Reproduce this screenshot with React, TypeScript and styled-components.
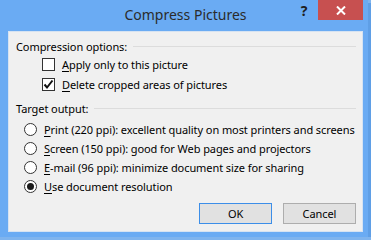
import styled, { createGlobalStyle } from 'styled-components'

const GlobalStyle = createGlobalStyle`
  html, body {
    margin: 0;
    padding: 0;
    background: #7fb4ee;
  }
  body {
    font-family: 'Segoe UI', 'Noto Sans', sans-serif;
    font-size: 11px;
    letter-spacing: -0.08px;
    color: #000;
  }
`

const Window = styled.div`
  width: 368px;
  height: 237px;
  box-sizing: border-box;
  background: #6aabf3;
  padding: 0 5px 5px 8px;
  display: flex;
  flex-direction: column;
  box-shadow: 3px 3px 0 #5f9fe6;
`

const TitleBar = styled.div`
  height: 31px;
  display: flex;
  align-items: flex-start;
`

const Title = styled.div`
  flex: 1;
  text-align: center;
  font-size: 14px;
  letter-spacing: 0;
  line-height: 30px;
  color: #2b2b2b;
  margin-left: 70px;
`

const HelpButton = styled.div`
  width: 22px;
  height: 20px;
  font-weight: bold;
  font-size: 14px;
  line-height: 22px;
  text-align: center;
  color: #1e1e1e;
  margin-right: 3px;
`

const CloseButton = styled.div`
  width: 45px;
  height: 20px;
  background: #c75050;
  display: flex;
  align-items: center;
  justify-content: center;
`

const Body = styled.div`
  flex: 1;
  background: #f0f0f0;
  border: 1px solid #d6e3f2;
  display: flex;
  flex-direction: column;
  padding: 6px 6px 0 7px;
`

const GroupHeader = styled.div<{ $space: number }>`
  display: flex;
  align-items: center;
  height: 16px;
  margin-bottom: ${(p) => p.$space}px;
  white-space: nowrap;
`

const HeaderLine = styled.div`
  flex: 1;
  height: 1px;
  background: #dcdcdc;
  margin-left: 6px;
`

const OptionRow = styled.label<{ $indent: number }>`
  display: flex;
  align-items: center;
  height: 20px;
  padding-left: ${(p) => p.$indent}px;
  gap: 7px;
  white-space: nowrap;
`

const RadioRow = styled(OptionRow)`
  height: 19px;
`

const CheckBox = styled.div`
  flex-shrink: 0;
  width: 11px;
  height: 11px;
  border: 1px solid #333;
  background: #fff;
  display: flex;
  align-items: center;
  justify-content: center;
`

const Radio = styled.div<{ $on?: boolean }>`
  flex-shrink: 0;
  width: 11px;
  height: 11px;
  border: 1px solid #333;
  border-radius: 50%;
  background: #fff;
  display: flex;
  align-items: center;
  justify-content: center;
  &::after {
    content: '';
    display: ${(p) => (p.$on ? 'block' : 'none')};
    width: 7px;
    height: 7px;
    border-radius: 50%;
    background: #1a1a1a;
  }
`

const Key = styled.span`
  text-decoration: underline;
  text-underline-offset: 2px;
`

const Gap = styled.div`
  height: 6px;
`

const ButtonRow = styled.div`
  display: flex;
  justify-content: flex-end;
  gap: 11px;
  margin-top: 7px;
`

const Button = styled.div<{ $primary?: boolean }>`
  width: 71px;
  height: 19px;
  border: 1px solid ${(p) => (p.$primary ? '#3c8ee8' : '#adadad')};
  background: #e1e1e1;
  display: flex;
  align-items: center;
  justify-content: center;
`

const Check = () => (
  <svg width='11' height='11' viewBox='0 0 11 11'>
    <path d='M1.5 5.5 L4 8.5 L9.5 1.5' fill='none' stroke='#111' strokeWidth='2' />
  </svg>
)

const Cross = () => (
  <svg width='10' height='9' viewBox='0 0 10 9'>
    <path d='M1 0.5 L9 8.5 M9 0.5 L1 8.5' stroke='#fff' strokeWidth='2' />
  </svg>
)

const radios = [
  { key: 'P', rest: 'rint (220 ppi): excellent quality on most printers and screens' },
  { key: 'S', rest: 'creen (150 ppi): good for Web pages and projectors' },
  { key: 'E', rest: '-mail (96 ppi): minimize document size for sharing' },
  { key: 'U', rest: 'se document resolution', on: true },
]

export default function App() {
  return (
    <>
      <GlobalStyle />
      <Window>
        <TitleBar>
          <Title>Compress Pictures</Title>
          <HelpButton>?</HelpButton>
          <CloseButton>
            <Cross />
          </CloseButton>
        </TitleBar>
        <Body>
          <GroupHeader $space={0}>
            Compression options:
            <HeaderLine />
          </GroupHeader>
          <OptionRow $indent={26}>
            <CheckBox />
            <span>
              <Key>A</Key>pply only to this picture
            </span>
          </OptionRow>
          <OptionRow $indent={26}>
            <CheckBox>
              <Check />
            </CheckBox>
            <span>
              <Key>D</Key>elete cropped areas of pictures
            </span>
          </OptionRow>
          <Gap />
          <GroupHeader $space={4}>
            Target output:
            <HeaderLine />
          </GroupHeader>
          {radios.map((r) => (
            <RadioRow $indent={8} key={r.key}>
              <Radio $on={r.on} />
              <span>
                <Key>{r.key}</Key>
                {r.rest}
              </span>
            </RadioRow>
          ))}
          <ButtonRow>
            <Button $primary>OK</Button>
            <Button>Cancel</Button>
          </ButtonRow>
        </Body>
      </Window>
    </>
  )
}
